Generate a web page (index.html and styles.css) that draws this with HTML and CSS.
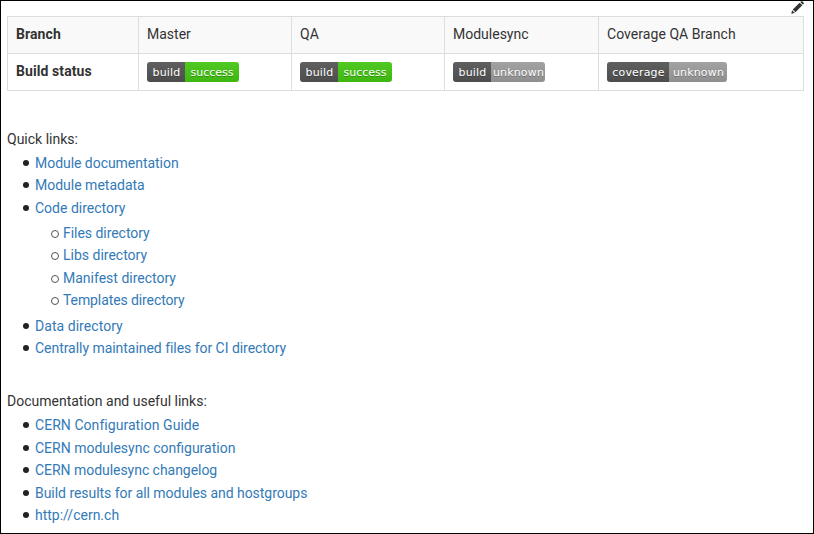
FILE: index.html
```html
<!DOCTYPE html>
<html lang="en">
<head>
<meta charset="utf-8">
<title>Module readme</title>
<link rel="stylesheet" href="styles.css">
</head>
<body>
<main class="page">
  <svg class="edit" viewBox="0 0 14 14" aria-hidden="true">
    <path d="M0.3 13.7 L1.2 9.9 L4.1 12.8 Z" fill="#333"/>
    <path d="M1.9 9.2 L9.3 1.8 L12.2 4.7 L4.8 12.1 Z" fill="#333"/>
    <path d="M10 1.1 L11 0.3 Q11.6 0 12.2 0.4 L13.6 1.8 Q14 2.4 13.7 3 L12.9 4 Z" fill="#333"/>
  </svg>
  <table class="status">
    <tr class="head">
      <th class="c1">Branch</th>
      <td class="c2">Master</td>
      <td class="c2">QA</td>
      <td class="c3">Modulesync</td>
      <td class="wide">Coverage QA Branch</td>
    </tr>
    <tr>
      <th>Build status</th>
      <td><span class="badge"><span class="l w38">build</span><span class="r ok w54">success</span></span></td>
      <td><span class="badge"><span class="l w38">build</span><span class="r ok w54">success</span></span></td>
      <td><span class="badge"><span class="l w38">build</span><span class="r na w54">unknown</span></span></td>
      <td><span class="badge"><span class="l w62">coverage</span><span class="r na w58">unknown</span></span></td>
    </tr>
  </table>
  <p class="first">Quick links:</p>
  <ul>
    <li><a class="tight" href="#">Module documentation</a></li>
    <li><a href="#">Module metadata</a></li>
    <li><a href="#">Code directory</a>
      <ul>
        <li><a class="tight" href="#">Files directory</a></li>
        <li><a href="#">Libs directory</a></li>
        <li><a href="#">Manifest directory</a></li>
        <li><a class="tighter" href="#">Templates directory</a></li>
      </ul>
    </li>
    <li><a class="wide" href="#">Data directory</a></li>
    <li><a class="tight" href="#">Centrally maintained files for CI directory</a></li>
  </ul>
  <p class="second">Documentation and useful links:</p>
  <ul>
    <li><a class="wide" href="#">CERN Configuration Guide</a></li>
    <li><a href="#">CERN modulesync configuration</a></li>
    <li><a class="tight" href="#">CERN modulesync changelog</a></li>
    <li><a class="tight" href="#">Build results for all modules and hostgroups</a></li>
    <li><a href="#">http://cern.ch</a></li>
  </ul>
</main>
</body>
</html>
```
FILE: styles.css
```css
* { box-sizing: border-box; }
html, body { margin: 0; height: 100%; }
body { font-family: Roboto, sans-serif; font-size: 14px; line-height: 22.4px; color: #333; background: #fff; overflow: hidden; }
.page { position: relative; height: 534px; border: 1px solid #000; padding: 15px 9px 0 6px; overflow: hidden; }
.edit { position: absolute; top: 0; right: 9px; width: 13px; height: 13px; }
.status { width: 797px; border-collapse: collapse; table-layout: fixed; line-height: 18px; }
.status th, .status td { border: 1px solid #ddd; padding: 8px; height: 37px; text-align: left; vertical-align: top; }
.status th { font-weight: 700; letter-spacing: .09px; }
.head th, .head td { background: #f9f9f9; }
.c1 { width: 131px; }
.c2 { width: 153px; }
.c3 { width: 154px; }
.badge { display: inline-flex; height: 20px; border-radius: 3px; overflow: hidden; font-family: "DejaVu Sans", sans-serif; font-size: 11px; line-height: 22px; color: #fff; vertical-align: top; text-shadow: 0 1px 0 rgba(1,1,1,.3); }
.l, .r { display: block; text-align: center; background-image: linear-gradient(rgba(187,187,187,.1), rgba(0,0,0,.1)); }
.l, .na { letter-spacing: .15px; padding-left: 1px; }
.l { background-color: #555; }
.ok { background-color: #4c1; }
.na { background-color: #9f9f9f; }
.w38 { width: 38px; }
.w54 { width: 54px; }
.w58 { width: 58px; }
.w62 { width: 62px; }
p { margin: 0; }
.first { margin-top: 37px; margin-bottom: 1.5px; }
.second { margin-top: 30.5px; margin-bottom: 2px; }
ul { margin: 0; padding-left: 28px; list-style: none; }
ul ul { margin: 2.8px 0 3.2px; }
li { position: relative; }
li::before { content: ""; position: absolute; left: -12px; top: 8px; width: 6px; height: 6px; border-radius: 50%; background: #222; }
li li::before { background: transparent; border: 1px solid #555; }
a { color: #337ab7; text-decoration: none; }
.tight { letter-spacing: -.04px; }
.tighter { letter-spacing: -.1px; }
.wide { letter-spacing: .05px; }
```
